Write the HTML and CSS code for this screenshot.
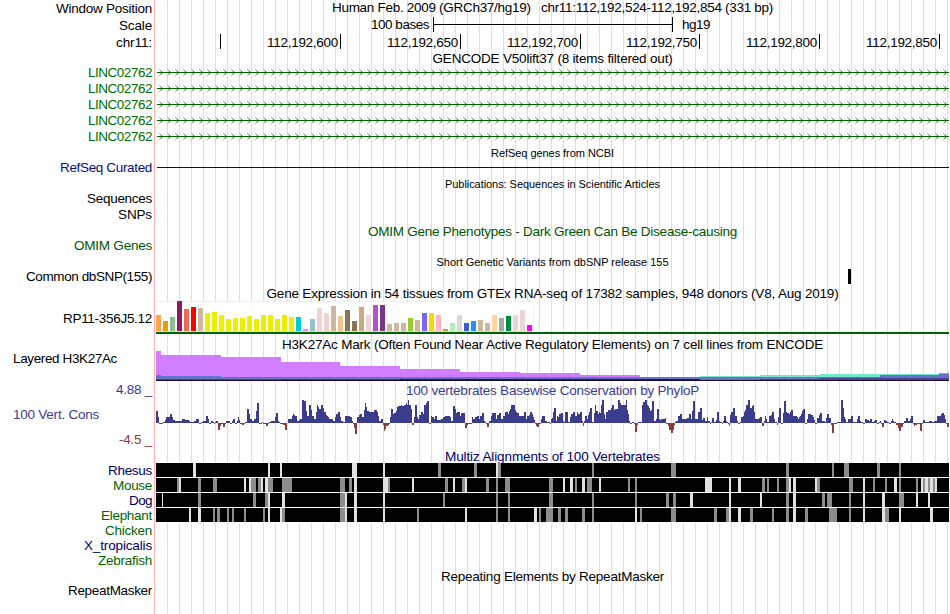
FILE: index.html
```html
<!DOCTYPE html>
<html lang="en">
<head>
<meta charset="utf-8">
<title>Genome Browser chr11:112,192,524-112,192,854</title>
<link rel="stylesheet" href="styles.css">
</head>
<body>
<main class="browser">
  <div class="row h17"><div class="label"><span data-w="96">Window Position</span></div><div class="title raised"><span data-w="441">Human Feb. 2009 (GRCh37/hg19) &nbsp; chr11:112,192,524-112,192,854 (331 bp)</span></div></div>
  <div class="row h17"><div class="label"><span data-w="33">Scale</span></div>
    <div class="track scale"><span data-w="58">100 bases</span><i class="ruler"></i><span data-w="28">hg19</span></div></div>
  <div class="row h17"><div class="label"><span data-w="36">chr11:</span></div>
    <div class="track ticks"><b></b><b><span data-w="71">112,192,600</span></b><b><span data-w="71">112,192,650</span></b><b><span data-w="71">112,192,700</span></b><b class="short"><span data-w="71">112,192,750</span></b><b><span data-w="71">112,192,800</span></b><b><span data-w="71">112,192,850</span></b></div></div>

  <div class="row h13"><div class="title lowered"><span data-w="240">GENCODE V50lift37 (8 items filtered out)</span></div></div>
  <div class="row h16 gene"><div class="label"><span data-w="64">LINC02762</span></div><svg class="track arrows"></svg></div>
  <div class="row h16 gene"><div class="label"><span data-w="64">LINC02762</span></div><svg class="track arrows"></svg></div>
  <div class="row h16 gene"><div class="label"><span data-w="64">LINC02762</span></div><svg class="track arrows"></svg></div>
  <div class="row h16 gene"><div class="label"><span data-w="64">LINC02762</span></div><svg class="track arrows"></svg></div>
  <div class="row h16 gene"><div class="label"><span data-w="64">LINC02762</span></div><svg class="track arrows"></svg></div>

  <div class="row h16"><div class="title small lowered"><span data-w="123">RefSeq genes from NCBI</span></div></div>
  <div class="row h15 refseq"><div class="label"><span data-w="92">RefSeq Curated</span></div><div class="track"><hr></div></div>
  <div class="row h16"><div class="title small lowered"><span data-w="215">Publications: Sequences in Scientific Articles</span></div></div>
  <div class="row h16"><div class="label"><span data-w="65">Sequences</span></div></div>
  <div class="row h16"><div class="label"><span data-w="34">SNPs</span></div></div>
  <div class="row h15 omim"><div class="title lowered"><span data-w="369">OMIM Gene Phenotypes - Dark Green Can Be Disease-causing</span></div></div>
  <div class="row h16 omim"><div class="label"><span data-w="78">OMIM Genes</span></div></div>
  <div class="row h15"><div class="title small lowered"><span data-w="232">Short Genetic Variants from dbSNP release 155</span></div></div>
  <div class="row h15"><div class="label"><span data-w="126">Common dbSNP(155)</span></div><div class="track"><i class="variant"></i></div></div>
  <div class="row h17"><div class="title lowered"><span data-w="572">Gene Expression in 54 tissues from GTEx RNA-seq of 17382 samples, 948 donors (V8, Aug 2019)</span></div></div>
  <div class="row h33"><div class="label lowered"><span data-w="89">RP11-356J5.12</span></div><div class="track gtex"><div class="tissues" id="tissues"></div></div></div>

  <div class="row h17"><div class="title lowered2"><span data-w="541">H3K27Ac Mark (Often Found Near Active Regulatory Elements) on 7 cell lines from ENCODE</span></div></div>
  <div class="row h30"><div class="label left high"><span data-w="104">Layered H3K27Ac</span></div><svg class="track" id="h3k"></svg></div>

  <div class="row h17 cons"><div class="label"><span data-w="36">4.88 _</span></div><div class="title lowered"><span data-w="293">100 vertebrates Basewise Conservation by PhyloP</span></div></div>
  <div class="row h34 cons"><div class="label left"><span data-w="86">100 Vert. Cons</span></div><svg class="track" id="phylop"></svg></div>
  <div class="row h16 neg"><div class="label"><span data-w="33">-4.5 _</span></div></div>
  <div class="row h15 navy"><div class="title lowered"><span data-w="215">Multiz Alignments of 100 Vertebrates</span></div></div>
  <div class="row h15 navy"><div class="label"><span data-w="44">Rhesus</span></div><svg class="track align"></svg></div>
  <div class="row h15 green"><div class="label"><span data-w="39">Mouse</span></div><svg class="track align"></svg></div>
  <div class="row h15 navy"><div class="label"><span data-w="23">Dog</span></div><svg class="track align"></svg></div>
  <div class="row h15 green"><div class="label"><span data-w="51">Elephant</span></div><svg class="track align"></svg></div>
  <div class="row h15 green"><div class="label"><span data-w="47">Chicken</span></div></div>
  <div class="row h15 navy"><div class="label"><span data-w="68">X_tropicalis</span></div></div>
  <div class="row h15 green"><div class="label"><span data-w="54">Zebrafish</span></div></div>
  <div class="row h15"><div class="title lowered"><span data-w="223">Repeating Elements by RepeatMasker</span></div></div>
  <div class="row h15"><div class="label"><span data-w="84">RepeatMasker</span></div></div>
</main>
<script src="tracks.js"></script>
</body>
</html>
```
FILE: styles.css
```css
* { box-sizing: border-box; }
body {
  margin: 0;
  background: #fff;
  color: #000;
  font-family: "Liberation Sans", Arial, sans-serif;
  font-size: 13.5px;
}
.browser {
  width: 949px;
  height: 614px;
  overflow: hidden;
  background:
    linear-gradient(90deg, #fff 154px, #ffb4b4 154px, #ffb4b4 155px, #fff 155px) 0 0 / 156px 100% no-repeat,
    linear-gradient(90deg, #dcdcfa 1px, transparent 1px) 167px 0 / 12px 100%;
}
.row { display: flex; width: 949px; white-space: nowrap; }
.h13 { height: 13px; line-height: 13px; }
.h15 { height: 15px; line-height: 15px; }
.h16 { height: 16px; line-height: 16px; }
.h17 { height: 17px; line-height: 17px; }
.h30 { height: 30px; line-height: 30px; }
.h33 { height: 33px; line-height: 33px; }
.h34 { height: 34px; line-height: 34px; }
.label { width: 152px; margin-right: 4px; text-align: right; flex: none; }
.label.left { text-align: left; padding-left: 13px; }
.label.high { line-height: 15px; }
.title { flex: 1; margin-left: 156px; text-align: center; }
.label + .title { margin-left: 0; }
.raised { margin-top: -1px; }
.lowered { padding-top: 1px; }
.lowered2 { padding-top: 2px; }
.small { font-size: 11px; }
.track { display: block; width: 793px; height: 100%; flex: none; }

.scale { display: flex; padding-left: 215px; line-height: 15px; }
.ruler {
  width: 240px;
  height: 15px;
  margin: 0 9px 0 4px;
  border: solid #000;
  border-width: 0 1px;
  background: linear-gradient(#000, #000) 0 7px / 100% 1px no-repeat;
}
.ticks { display: flex; }
.ticks b {
  width: 120px;
  height: 15px;
  padding-right: 2px;
  border-right: 1px solid #000;
  font-weight: normal;
  line-height: 17px;
  text-align: right;
}
.ticks b:first-child { width: 65px; }
.ticks .short { width: 119px; }

.gene, .omim, .green { color: #006400; }
.gene .label { color: #007000; padding-top: 1px; }
.omim { color: #005500; }
.refseq .label { color: #0c0c78; }
.refseq hr { margin: 7px 0 0 1px; border: 0; height: 1px; background: #0a0a5a; }
.navy { color: #000064; }
.cons { color: #3c3c8c; }
.neg { color: #8c3c3c; }
.variant { display: block; width: 3px; height: 15px; margin-left: 692px; background: #000; }

.gtex { border-bottom: 2px solid #006400; }
.tissues {
  display: flex;
  align-items: flex-end;
  gap: 2px;
  width: 378px;
  height: 31px;
  background: #fff;
  border-top: 1px solid #f0f0f0;
  border-right: 1px solid #f0f0f0;
  border-bottom: 1px solid #dcdcdc;
}
.tissues i { width: 5px; flex: none; }
```
FILE: tracks.js
```js
document.querySelectorAll('[data-w]').forEach(el => {
  el.style.letterSpacing = (el.dataset.w - el.getBoundingClientRect().width) / el.textContent.length + 'px';
});

const rect = (x, y, w, h, fill) => `<rect x="${x}" y="${y}" width="${w}" height="${h}" fill="${fill}"/>`;
const crisp = body => `<g shape-rendering="crispEdges">${body}</g>`;

// Gene models: intron line with strand arrows.
document.querySelectorAll('.arrows').forEach(svg => {
  let s = rect(1, 8, 792, 1, '#006400');
  const shades = ['#96c896', '#5aa05a', '#207820'];
  for (let x = 3; x < 792; x += 8) {
    for (let k = 0; k < 3; k++) {
      s += rect(x + k, 5 + k, 1, 1, shades[k]) + rect(x + k, 11 - k, 1, 1, shades[k]);
    }
  }
  svg.innerHTML = crisp(s);
});

// GTEx: colour and height of each tissue bar.
const tissues = `ffa54f 16,ee9a00 10,8fbc8f 14,8b1c62 30,ee6a50 22,ff0000 24,cdb79e 23,eeee00 18,eeee00 19,eeee00 16,
eeee00 12,eeee00 13,eeee00 13,eeee00 15,eeee00 12,eeee00 16,eeee00 16,eeee00 12,eeee00 16,eeee00 14,00cdcd 14,ee82ee 2,
9ac0cd 12,eed5d2 23,eed5d2 18,cdb79e 25,eec591 15,8b7355 21,8b7355 10,cdaa7d 24,eed5d2 16,b452cd 26,7a378b 26,cdb79e 7,
cdb79e 8,cdb79e 8,9acd32 13,cdb79e 11,7a67ee 18,ffd700 18,ffb6c1 16,cd9b1d 2,b4eeb4 8,d9d9d9 16,3a5fcd 8,1e90ff 10,
cdb79e 11,cdb79e 8,ffd39b 16,a6a6a6 13,008b45 15,eed5d2 16,eed5d2 21,ff00ff 6`;
document.getElementById('tissues').innerHTML = tissues.split(',').map(t => {
  const [c, h] = t.trim().split(' ');
  return `<i style="background:#${c};height:${h}px"></i>`;
}).join('');

// H3K27Ac: overlaid signal steps, [start, end, top].
const layers = [
  ['#d17dff', [[0, 5, 0], [5, 65, 4], [65, 125, 6], [125, 184, 11], [184, 244, 15], [244, 304, 18], [304, 364, 21], [364, 424, 22], [424, 484, 24], [783, 793, 22]]],
  ['#73e6cd', [[544, 604, 25], [604, 664, 24], [664, 783, 23]]],
  ['#6473c8', [[0, 5, 24], [5, 65, 25], [65, 724, 26], [724, 783, 24], [783, 793, 23]]],
  ['#46468c', [[0, 125, 28], [604, 664, 28], [664, 793, 27]]],
  ['#6e2864', [[125, 244, 28]]],
  ['#28145a', [[244, 544, 28]]],
  ['#1e0a28', [[0, 793, 29]]]
];
document.getElementById('h3k').innerHTML = crisp(layers.map(([c, s]) =>
  s.map(([a, b, t]) => rect(a, t, b - a, 30 - t, c)).join('')).join(''));

// PhyloP: "start height" pairs in thirds of a pixel, four windows of 200px.
const phylop = [
`18 36,24 18,27 -3,39 3,45 9,48 18,60 27,66 18,69 9,75 6,96 12,105 9,117 6,120 3,132 6,138 12,147 -3,153 3,159 6,168 21,174 12,177 -3,183 6,189 3,192 -3,195 3,198 6,204 -21,210 -9,213 -3,219 -12,225 -3,228 6,240 -3,246 6,249 12,255 -3,261 6,264 18,267 9,270 -3,276 -6,282 -3,285 3,291 42,297 27,300 12,306 6,312 12,318 36,321 60,327 -3,336 3,339 -3,348 -9,354 -3,357 3,363 6,375 18,378 30,384 6,387 3,390 -3,399 -6,405 -21,411 0,414 12,426 21,429 27,432 24,435 21,441 6,447 9,450 12,456 69,462 66,468 36,471 21,477 54,483 39,486 21,492 12,498 33,501 54,504 48,507 42,513 54,519 45,522 33,528 24,531 21,534 18,537 12,549 6,555 18,558 27,564 33,570 18,573 6,579 3,585 21`,
`0 18,6 6,9 -3,12 -15,15 -33,21 18,27 24,30 27,36 18,42 39,45 60,48 48,51 36,57 33,72 39,81 33,84 21,87 6,93 12,99 -6,102 -24,105 -18,108 -9,114 -6,117 -3,120 18,123 42,129 27,132 30,138 36,141 48,144 51,153 54,156 51,162 54,168 60,171 54,174 69,177 54,183 42,186 -6,192 18,195 54,201 18,204 12,207 24,213 33,219 27,222 54,228 60,231 66,237 -3,243 21,246 18,252 12,255 21,261 9,273 12,279 18,285 21,300 18,303 6,309 51,315 42,318 30,321 33,330 21,333 30,345 -15,351 -6,354 -3,366 18,369 12,375 18,381 21,387 12,390 21,396 30,402 6,405 3,408 -3,411 -12,417 6,423 21,426 30,438 12,441 24,447 30,453 12,459 21,465 33,474 27,477 36,480 42,483 54,495 39,498 33,501 30,507 21,522 33,528 12,531 21,537 24,540 33,546 27,549 18,552 9,555 -3,558 -9,561 -12,567 -3,573 12,576 21,585 6,591 3`,
`0 -3,3 12,6 15,9 33,12 45,18 6,21 21,24 18,27 27,33 30,39 6,42 3,45 33,54 3,60 18,63 27,69 33,75 21,81 33,84 27,90 33,96 6,99 -9,102 6,105 21,111 12,114 24,117 33,120 45,126 3,132 30,135 54,138 36,144 27,147 33,150 30,153 54,156 69,162 27,165 12,168 33,174 39,183 45,186 54,192 39,195 42,204 69,210 60,213 54,222 54,228 69,231 39,234 27,237 6,240 -3,246 3,252 -3,255 -27,261 -6,264 3,276 54,279 63,285 69,291 54,294 51,297 45,300 36,303 39,306 66,312 6,318 12,321 42,327 12,330 9,333 12,345 15,348 -3,354 -9,357 -21,363 -30,369 -21,372 -6,375 3,378 6,384 21,390 27,396 12,411 15,417 27,423 12,426 36,429 66,435 12,444 33,450 45,456 9,459 15,465 6,471 18,474 6,480 -3,483 3,486 15,492 3,498 9,501 33,507 6,510 3,516 -3,519 6,522 21,528 6,531 3,534 -3,537 -9,540 24,543 33,549 45,555 21,561 6,564 -3,570 3,573 18,579 21,582 33,585 39,588 54,594 69`,
`0 45,6 51,9 54,12 33,15 12,27 15,30 18,36 -9,42 6,45 21,48 12,51 3,57 21,63 24,66 33,72 12,75 3,81 -6,84 18,87 45,93 -3,99 30,102 66,108 33,111 30,117 27,120 33,123 39,129 21,141 18,144 12,147 18,150 21,153 27,156 36,159 42,165 -3,171 12,174 27,183 24,189 18,192 9,195 -3,201 15,207 24,210 30,216 6,225 3,228 15,231 27,237 15,243 -6,246 -30,252 -3,261 3,273 69,279 45,282 18,285 12,288 3,294 12,303 21,309 3,321 12,324 21,330 6,333 3,339 -3,345 12,351 9,357 6,360 12,366 3,372 6,375 9,381 -3,387 3,390 6,393 -3,396 -12,402 9,408 6,411 3,417 -3,423 6,426 12,429 6,432 3,438 -6,444 -15,447 -24,453 -12,459 -3,462 6,468 15,474 6,480 12,483 21,489 -3,492 -9,495 -6,501 -3,510 -24,516 -3,519 9,525 3,537 6,546 3,552 6,561 21,573 27,576 30,582 24,585 12,588 -3,591 -12`
];
const steps = phylop.flatMap((part, i) => part.split(',').map(p => {
  const [x, h] = p.split(' ').map(Number);
  return [(x + i * 600 - 18) / 3, h / 3];
}));
document.getElementById('phylop').innerHTML = crisp(steps.map(([x, h], i) => {
  const end = i + 1 < steps.length ? steps[i + 1][0] : 793;
  return h > 0 ? rect(x, 25 - h, end - x, h, '#3c3c8c') : rect(x, 25, end - x, -h, '#8c3c3c');
}).join(''));
document.getElementById('phylop').style.overflow = 'visible';

// Alignments: L = unaligned light gap, G = grey mismatch, in thirds of a pixel per 200px window.
const aligned = [
  ['L129-138 L354-360 L390-396', 'L6-21 L99-105 G264-273 G372-381 L438-444 G444-453', 'G126-132 G363-378', 'G108-117 G246-252 G282-297 G381-390 G447-453'],
  ['G81-87 L87-93 G144-153 G189-201 L282-288 L297-303 G303-318 G324-333 L333-339 L345-354 G354-369 G396-426 G570-585 G597-600', 'G0-6 L12-21 L99-114 G114-120 L186-192 G285-294 L309-315 G336-345 L345-351 G408-417 G438-444 G465-480 G597-600', 'G0-9 L39-45 L60-69 G75-81 L96-105 G111-126 L147-153 G234-240 G255-261 L465-486 L537-543 L564-573', 'G36-45 G51-57 G81-87 G108-117 L117-123 L129-138 L195-201 G201-210 G297-309 L339-345 G369-375 G405-411 L432-441 G447-453 G498-504 L513-519 G519-525 L525-534 G534-540 L540-549 G549-555 L555-561'],
  ['L36-39 G144-153 G309-318 G345-354 L354-360 L396-405 G570-585 L585-591', 'L12-21 L99-105 G279-285 G438-444 G474-480 G597-600', 'G0-9 G126-132 G255-261 G348-357 G369-378 L420-429 L537-543', 'L30-36 G108-117 L129-138 G216-225 G231-246 G297-303 L339-345 L396-405 G447-462 L498-504 L534-540'],
  ['L117-123 L144-153 G189-195 G201-210 G231-237 G246-252 G282-288 G339-345 L354-360 L390-396 G396-405 G570-585 L585-591', 'L12-21 L99-105 G201-207 L345-351 G438-444 G474-480 L552-561 G567-573 G588-600', 'G0-9 G24-33 G45-54 G96-105 G126-132 L255-261 G270-276 G363-378 G492-501 G528-537 L537-543 L564-573', 'G0-9 G66-72 G108-117 L129-138 G165-174 G237-261 G297-303 L339-345 L396-405 G405-417 L447-453 L540-549']
];
document.querySelectorAll('.align').forEach((svg, r) => {
  let s = rect(0, 0, 793, 15, '#fff') + rect(0, 0, 793, 14, '#000');
  aligned[r].forEach((part, i) => part.split(' ').forEach(g => {
    const [a, b] = g.slice(1).split('-').map(v => (+v + i * 600 - 18) / 3);
    s += rect(a, 0, b - a, 14, g[0] === 'L' ? '#e1e1e1' : '#8c8c8c');
  }));
  svg.innerHTML = crisp(s);
});
```
